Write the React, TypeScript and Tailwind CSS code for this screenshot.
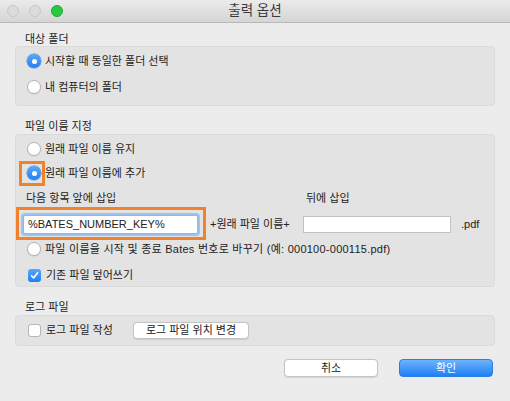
import type { ReactNode } from "react"

const font = { fontFamily: '"Liberation Sans", "Noto Sans CJK KR", sans-serif' }

function Radio({ checked = false }: { checked?: boolean }) {
  if (checked) {
    return (
      <span className="flex h-[14px] w-[14px] shrink-0 items-center justify-center rounded-full bg-gradient-to-b from-[#5aa7f9] to-[#1f7ff0] shadow-[0_0_0_0.5px_#2f7fe0]">
        <span className="h-[5px] w-[5px] rounded-full bg-white" />
      </span>
    )
  }
  return (
    <span className="h-[14px] w-[14px] shrink-0 rounded-full border border-[#b5b5b5] bg-white shadow-[0_0.5px_1px_rgba(0,0,0,0.12)]" />
  )
}

function Check({ checked = false }: { checked?: boolean }) {
  if (checked) {
    return (
      <span className="flex h-[13px] w-[13px] shrink-0 items-center justify-center rounded-[3px] bg-gradient-to-b from-[#5aa7f9] to-[#1f7ff0]">
        <svg width="9" height="9" viewBox="0 0 9 9" fill="none">
          <path d="M1.5 4.8 L3.6 7 L7.6 1.8" stroke="white" strokeWidth="1.6" strokeLinecap="round" strokeLinejoin="round" />
        </svg>
      </span>
    )
  }
  return <span className="h-[13px] w-[13px] shrink-0 rounded-[3px] border border-[#b5b5b5] bg-white" />
}

function Row({ children, className = "" }: { children: ReactNode; className?: string }) {
  return <div className={`flex h-[24px] items-center gap-[4px] pl-[11px] ${className}`}>{children}</div>
}

function Label({ children }: { children: ReactNode }) {
  return <div className="h-[13px] pl-[10px] text-[11px] leading-[13px] text-[#222]">{children}</div>
}

function Box({ children, className = "" }: { children: ReactNode; className?: string }) {
  return (
    <div className={`rounded-[4px] border border-[#dadada] bg-[#e3e3e3] ${className}`}>{children}</div>
  )
}

export default function App() {
  return (
    <div className="relative h-[401px] w-[510px] overflow-hidden bg-[#ececec] text-[11px] text-[#222]" style={font}>
      {/* title bar */}
      <div className="relative flex h-[23px] items-center justify-center border-b border-[#b8b8b8] bg-gradient-to-b from-[#ebebeb] to-[#d5d5d5]">
        <div className="absolute left-[7px] top-[5px] flex gap-[8px]">
          <span className="h-[12px] w-[12px] rounded-full border border-[#c8c8c8] bg-[#dcdcdc]" />
          <span className="h-[12px] w-[12px] rounded-full border border-[#c8c8c8] bg-[#dcdcdc] ml-[2px]" />
          <span className="h-[12px] w-[12px] rounded-full border border-[#1eaa36] bg-[#2ac840] ml-[2px]" />
        </div>
        <span className="text-[13.5px] text-[#3a3a3a]">출력 옵션</span>
      </div>

      <div className="px-[15px]">
        <div className="mt-[10px]">
          <Label>대상 폴더</Label>
        </div>
        <Box className="h-[60px] pt-[2px]">
          <Row>
            <Radio checked />
            <span>시작할 때 동일한 폴더 선택</span>
          </Row>
          <Row className="mt-[2px]">
            <Radio />
            <span>내 컴퓨터의 폴더</span>
          </Row>
        </Box>

        <div className="mt-[14px] mb-[1px]">
          <Label>파일 이름 지정</Label>
        </div>
        <Box className="relative h-[153px] pt-[2px]">
          <Row>
            <Radio />
            <span>원래 파일 이름 유지</span>
          </Row>
          <Row>
            <Radio checked />
            <span>원래 파일 이름에 추가</span>
          </Row>
          <div className="flex h-[26px] items-center pl-[10px]">
            <span className="w-[280px]">다음 항목 앞에 삽입</span>
            <span>뒤에 삽입</span>
          </div>
          <div className="flex h-[26px] items-center pl-[7px]">
            <div className="flex h-[19px] w-[175px] items-center rounded-[2px] border border-[#8fb7ea] bg-white pl-[4px] shadow-[0_0_0_2px_#9cc3f0] text-[11px]">
              %BATES_NUMBER_KEY%
            </div>
            <span className="ml-[12px] w-[93px]">+원래 파일 이름+</span>
            <div className="h-[17px] w-[148px] border border-[#c2c2c2] bg-white" />
            <span className="ml-[10px]">.pdf</span>
          </div>
          <Row>
            <Radio />
            <span className="tracking-[0.25px]">파일 이름을 시작 및 종료 Bates 번호로 바꾸기 (예: 000100-000115.pdf)</span>
          </Row>
          <Row className="mt-[2px] pl-[12px]">
            <Check checked />
            <span className="ml-[1px]">기존 파일 덮어쓰기</span>
          </Row>

          {/* annotation highlights */}
          <div className="absolute left-[3px] top-[26px] h-[25px] w-[26px] border-[3px] border-[#f0822d]" />
          <div className="absolute left-[0px] top-[72px] h-[33px] w-[190px] border-[3px] border-[#f0822d]" />
        </Box>

        <div className="mt-[14px] mb-[1px]">
          <Label>로그 파일</Label>
        </div>
        <Box className="flex h-[31px] items-center pl-[12px]">
          <Check />
          <span className="ml-[5px] w-[87px]">로그 파일 작성</span>
          <button className="h-[17px] w-[116px] rounded-[4px] border border-[#c4c4c4] bg-white text-[11px] leading-[15px] shadow-[0_0.5px_1px_rgba(0,0,0,0.1)]">
            로그 파일 위치 변경
          </button>
        </Box>

        <div className="mt-[13px] flex justify-end gap-[21px] pr-[2px]">
          <button className="h-[18px] w-[94px] rounded-[4px] border border-[#c4c4c4] bg-white text-[11px] leading-[16px] shadow-[0_0.5px_1px_rgba(0,0,0,0.1)]">
            취소
          </button>
          <button className="h-[18px] w-[94px] rounded-[4px] border border-[#2a7fe6] bg-gradient-to-b from-[#6bb3fb] to-[#1b7ff5] text-[11px] leading-[16px] text-white">
            확인
          </button>
        </div>
      </div>
    </div>
  )
}
